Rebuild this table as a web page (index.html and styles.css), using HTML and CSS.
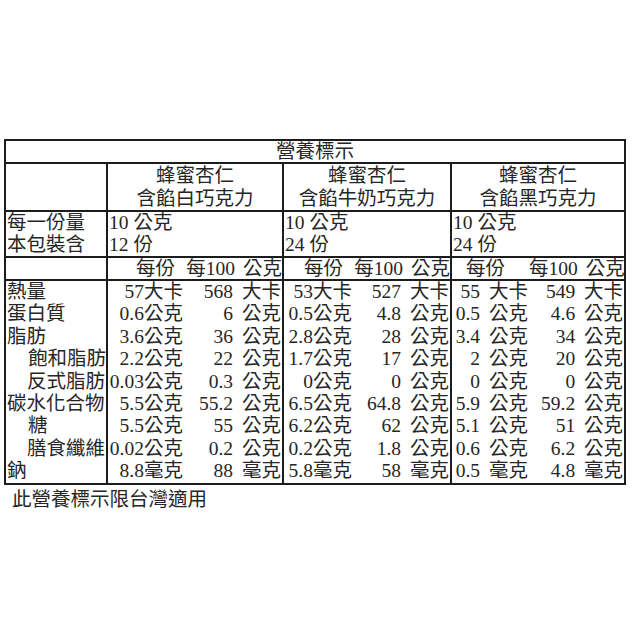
FILE: index.html
```html
<!DOCTYPE html>
<html lang="zh-Hant">
<head>
<meta charset="utf-8">
<title>營養標示</title>
<link rel="stylesheet" href="styles.css">
</head>
<body>
<div class="wrap">
<table class="nut">
<colgroup>
<col class="c-lbl"><col class="c-p1a"><col class="c-p1b"><col class="c-p2a"><col class="c-p2b"><col class="c-p3a"><col class="c-p3b">
</colgroup>
<tr class="r-title"><td colspan="7" class="title">營養標示</td></tr>
<tr class="r-prod">
<td class="lbl"></td>
<td colspan="2" class="prod g">蜂蜜杏仁<br>含餡白巧克力</td>
<td colspan="2" class="prod g">蜂蜜杏仁<br>含餡牛奶巧克力</td>
<td colspan="2" class="prod g">蜂蜜杏仁<br>含餡黑巧克力</td>
</tr>
<tr class="r-serv">
<td class="lbl">每一份量<br>本包裝含</td>
<td colspan="2" class="serv g">10 公克<br>12 份</td>
<td colspan="2" class="serv g">10 公克<br>24 份</td>
<td colspan="2" class="serv g">10 公克<br>24 份</td>
</tr>
<tr class="r-sub">
<td class="lbl"></td>
<td class="sa g s1">每份</td><td class="sb">每100 公克</td>
<td class="sa g s2">每份</td><td class="sb">每100 公克</td>
<td class="sa g s3">每份</td><td class="sb">每100 公克</td>
</tr>
<tr class="r-data first">
<td class="lbl">熱量</td>
<td class="v g">57大卡</td><td class="v">568 大卡</td>
<td class="v g">53大卡</td><td class="v">527 大卡</td>
<td class="v g">55 大卡</td><td class="v">549 大卡</td>
</tr>
<tr class="r-data">
<td class="lbl">蛋白質</td>
<td class="v g">0.6公克</td><td class="v">6 公克</td>
<td class="v g">0.5公克</td><td class="v">4.8 公克</td>
<td class="v g">0.5 公克</td><td class="v">4.6 公克</td>
</tr>
<tr class="r-data">
<td class="lbl">脂肪</td>
<td class="v g">3.6公克</td><td class="v">36 公克</td>
<td class="v g">2.8公克</td><td class="v">28 公克</td>
<td class="v g">3.4 公克</td><td class="v">34 公克</td>
</tr>
<tr class="r-data">
<td class="lbl in1">飽和脂肪</td>
<td class="v g">2.2公克</td><td class="v">22 公克</td>
<td class="v g">1.7公克</td><td class="v">17 公克</td>
<td class="v g">2 公克</td><td class="v">20 公克</td>
</tr>
<tr class="r-data">
<td class="lbl in2">反式脂肪</td>
<td class="v g">0.03公克</td><td class="v">0.3 公克</td>
<td class="v g">0公克</td><td class="v">0 公克</td>
<td class="v g">0 公克</td><td class="v">0 公克</td>
</tr>
<tr class="r-data">
<td class="lbl">碳水化合物</td>
<td class="v g">5.5公克</td><td class="v">55.2 公克</td>
<td class="v g">6.5公克</td><td class="v">64.8 公克</td>
<td class="v g">5.9 公克</td><td class="v">59.2 公克</td>
</tr>
<tr class="r-data">
<td class="lbl in3">糖</td>
<td class="v g">5.5公克</td><td class="v">55 公克</td>
<td class="v g">6.2公克</td><td class="v">62 公克</td>
<td class="v g">5.1 公克</td><td class="v">51 公克</td>
</tr>
<tr class="r-data">
<td class="lbl in4">膳食纖維</td>
<td class="v g">0.02公克</td><td class="v">0.2 公克</td>
<td class="v g">0.2公克</td><td class="v">1.8 公克</td>
<td class="v g">0.6 公克</td><td class="v">6.2 公克</td>
</tr>
<tr class="r-data last">
<td class="lbl">鈉</td>
<td class="v g">8.8毫克</td><td class="v">88 毫克</td>
<td class="v g">5.8毫克</td><td class="v">58 毫克</td>
<td class="v g">0.5 毫克</td><td class="v">4.8 毫克</td>
</tr>
</table>
<p class="note">此營養標示限台灣適用</p>
</div>
</body>
</html>
```
FILE: styles.css
```css
html, body {
  margin: 0;
  padding: 0;
  background: #ffffff;
}
body {
  font-family: "Liberation Serif", "Noto Sans CJK TC", serif;
  font-size: 19.5px;
  color: #262626;
}
.wrap {
  padding: 139px 0 0 4px;
}
.nut {
  border-collapse: collapse;
  table-layout: fixed;
  width: 622px;
  border: 2px solid #1c1c1c;
}
.c-lbl { width: 102px; }
.c-p1a { width: 77px; }
.c-p1b { width: 99px; }
.c-p2a { width: 70px; }
.c-p2b { width: 98px; }
.c-p3a { width: 78px; }
.c-p3b { width: 96px; }
.nut td {
  padding: 0;
  white-space: nowrap;
  overflow: hidden;
  vertical-align: middle;
}
.nut td.g {
  border-left: 2px solid #1c1c1c;
}
.r-title td,
.r-prod td,
.r-serv td,
.r-sub td {
  border-bottom: 2px solid #1c1c1c;
}
.title {
  text-align: center;
  line-height: 21px;
}
.prod {
  text-align: center;
  line-height: 23px;
}
.r-serv td {
  line-height: 22px;
}
.serv {
  text-align: left;
  padding-left: 1px !important;
}
.lbl {
  text-align: left;
  padding-left: 1px !important;
}
.r-sub td {
  line-height: 21px;
}
.sa.s1 { text-align: right; padding-right: 9px !important; }
.sa.s2 { text-align: right; padding-right: 10px !important; }
.sa.s3 { text-align: left; padding-left: 14px !important; }
.sb {
  text-align: right;
  word-spacing: 3px;
}
.r-data td {
  line-height: 22.4px;
}
.v {
  text-align: right;
  word-spacing: 4px;
  padding-right: 1px !important;
}
.in1 { padding-left: 22px !important; }
.in2 { padding-left: 21px !important; }
.in3 { padding-left: 22px !important; }
.in4 { padding-left: 21px !important; }
.note {
  margin: 3px 0 0 8px;
  line-height: 24px;
}
```
